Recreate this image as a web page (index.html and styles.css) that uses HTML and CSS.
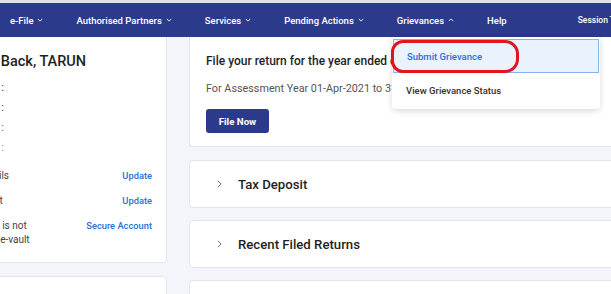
FILE: index.html
```html
<!DOCTYPE html>
<html lang="en">
<head>
    <meta charset="UTF-8">
    <meta name="viewport" content="width=device-width, initial-scale=1.0">
    <title>Dashboard - e-Filing</title>
    <link rel="stylesheet" href="styles.css">
</head>
<body>
    <div class="top-strip"></div>
    <nav class="navbar">
        <span class="nav-item">e-File <svg class="chev" viewBox="0 0 8 5"><path d="M1 1l3 3 3-3"/></svg></span>
        <span class="nav-item">Authorised Partners <svg class="chev" viewBox="0 0 8 5"><path d="M1 1l3 3 3-3"/></svg></span>
        <span class="nav-item">Services <svg class="chev" viewBox="0 0 8 5"><path d="M1 1l3 3 3-3"/></svg></span>
        <span class="nav-item">Pending Actions <svg class="chev" viewBox="0 0 8 5"><path d="M1 1l3 3 3-3"/></svg></span>
        <span class="nav-item">Grievances <svg class="chev" viewBox="0 0 8 5"><path d="M1 4l3-3 3 3"/></svg></span>
        <span class="nav-item">Help</span>
        <span class="nav-item session">Session Time</span>
    </nav>

    <div class="page">
        <aside class="side">
            <div class="card profile">
                <h3 class="welcome">Welcome Back, TARUN</h3>
                <div class="info">
                    <div class="info-row"><span class="info-label">PAN :</span></div>
                    <div class="info-row"><span class="info-label">Aadhaar :</span></div>
                    <div class="info-row"><span class="info-label link">Mobile :</span></div>
                    <div class="info-row"><span class="info-label muted">Email :</span></div>
                </div>

                <div class="actions">
                    <div class="action-row">
                        <span class="action-label">Contact Details</span>
                        <a class="action-link">Update</a>
                    </div>
                    <div class="action-row">
                        <span class="action-label">Bank Account</span>
                        <a class="action-link">Update</a>
                    </div>
                    <div class="action-row">
                        <span class="action-label">Your account is not secured with e-vault</span>
                        <a class="action-link">Secure Account</a>
                    </div>
                </div>
            </div>
            <div class="card side-next"></div>
        </aside>

        <main class="main">
            <div class="card return-card">
                <h3 class="return-title">File your return for the year ended on 31-Mar-2022</h3>
                <p class="return-sub">For Assessment Year 01-Apr-2021 to 31-Mar-2022</p>
                <button class="file-btn">File Now</button>
            </div>
            <div class="card fold">
                <svg class="fold-chev" viewBox="0 0 6 10"><path d="M1 1l4 4-4 4"/></svg>
                <span>Tax Deposit</span>
            </div>
            <div class="card fold">
                <svg class="fold-chev" viewBox="0 0 6 10"><path d="M1 1l4 4-4 4"/></svg>
                <span>Recent Filed Returns</span>
            </div>
            <div class="card fold"></div>
        </main>
    </div>

    <div class="dropdown">
        <div class="dd-item active">Submit Grievance</div>
        <div class="dd-item">View Grievance Status</div>
    </div>
    <div class="mark"></div>
</body>
</html>
```

FILE: styles.css
```css
:root {
    --navy: #2c3a8c;
    --bg: #f4f5fa;
    --line: #e4e6ee;
    --link: #2a6fd4;
    --text: #1f1f1f;
}

* {
    margin: 0;
    padding: 0;
    box-sizing: border-box;
}

body {
    width: 611px;
    height: 294px;
    overflow: hidden;
    background: var(--bg);
    font-family: Roboto, "Liberation Sans", sans-serif;
    color: var(--text);
    position: relative;
}

.top-strip {
    height: 3px;
    background: #dfe1ea;
}

.navbar {
    height: 34px;
    background: var(--navy);
    display: flex;
    align-items: center;
    padding-left: 10px;
    gap: 33px;
    white-space: nowrap;
}

.nav-item {
    color: #fff;
    font-size: 9.5px;
    font-weight: 500;
    display: flex;
    align-items: center;
    gap: 4px;
}

.nav-item.session {
    font-size: 8.5px;
    margin-left: 38px;
}

.chev {
    width: 6px;
    height: 4px;
    fill: none;
    stroke: #fff;
    stroke-width: 1.2;
}

.page {
    display: flex;
    gap: 22px;
}

.card {
    background: #fff;
    border: 1px solid var(--line);
    border-radius: 4px;
}

.side {
    width: 167px;
    flex-shrink: 0;
    display: flex;
    flex-direction: column;
    gap: 13px;
}

.profile {
    margin-left: -82px;
    width: 249px;
    border-top: none;
    border-radius: 0 0 4px 4px;
    padding: 16px 14px 16px 22px;
    height: 226px;
}

.welcome {
    font-size: 14.5px;
    font-weight: 500;
    margin-left: -4px;
    line-height: 17px;
}

.info {
    margin-top: 11px;
    display: flex;
    flex-direction: column;
    gap: 7px;
}

.info-row {
    width: 63px;
    text-align: right;
    font-size: 11px;
    line-height: 13px;
    color: #333;
}

.info-label.link {
    color: #4b5fd0;
}

.info-label.muted {
    color: #8a9bbf;
}

.actions {
    margin-top: 15px;
    display: flex;
    flex-direction: column;
    gap: 11px;
}

.action-row {
    display: flex;
    justify-content: space-between;
    align-items: flex-start;
    font-size: 10px;
    line-height: 14px;
}

.action-label {
    width: 92px;
    color: #444;
}

.action-link {
    color: var(--link);
    font-weight: 500;
    font-size: 9.3px;
}

.side-next {
    margin-left: -82px;
    width: 249px;
    height: 40px;
}

.main {
    width: 440px;
    flex-shrink: 0;
    display: flex;
    flex-direction: column;
    gap: 12px;
}

.return-card {
    border-top: none;
    border-radius: 0 0 4px 4px;
    padding: 17px 16px 13px;
    height: 110px;
    margin-bottom: 1px;
}

.return-title {
    font-size: 12px;
    font-weight: 500;
    white-space: nowrap;
    line-height: 15px;
}

.return-sub {
    font-size: 10.8px;
    color: #555;
    margin-top: 13px;
    white-space: nowrap;
    line-height: 14px;
}

.file-btn {
    margin-top: 13px;
    background: var(--navy);
    color: #fff;
    border: none;
    border-radius: 3px;
    width: 63px;
    height: 24px;
    font-family: inherit;
    font-size: 9.7px;
    font-weight: 700;
}

.fold {
    height: 48px;
    display: flex;
    align-items: center;
    padding-left: 27px;
    gap: 16px;
    font-size: 13.2px;
    font-weight: 500;
}

.fold-chev {
    width: 5px;
    height: 8px;
    fill: none;
    stroke: #666;
    stroke-width: 1.2;
}

.dropdown {
    position: absolute;
    left: 392px;
    top: 37px;
    width: 208px;
    height: 72px;
    background: #fff;
    border-radius: 0 0 4px 4px;
    box-shadow: 0 2px 6px rgba(0,0,0,0.15);
    padding: 2px 1px 0;
}

.dd-item {
    height: 34px;
    display: flex;
    align-items: center;
    padding-left: 13px;
    font-size: 9.5px;
    font-weight: 500;
    color: #333;
}

.dd-item.active {
    background: #eaf2fd;
    border: 1px solid #86b3ec;
    color: var(--link);
}

.mark {
    position: absolute;
    left: 391px;
    top: 40px;
    width: 128px;
    height: 33px;
    border: 3px solid #e3141e;
    border-radius: 12px 14px 14px 12px;
}
```
